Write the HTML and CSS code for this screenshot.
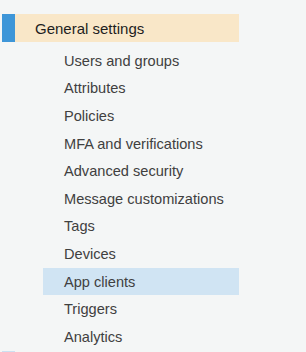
FILE: index.html
```html
<!DOCTYPE html>
<html>
<head>
    <meta charset='utf-8'>
    <title>General settings</title>
    <meta name='viewport' content='width=device-width, initial-scale=1'>
    <link rel="stylesheet" href="styles.css">
</head>
<body>
<div class="sidebar">
    <div class="group">
        <div class="groupHead active">
            <span class="groupTitle">General settings</span>
        </div>
        <ul class="items">
            <li class="item">Users and groups</li>
            <li class="item">Attributes</li>
            <li class="item">Policies</li>
            <li class="item">MFA and verifications</li>
            <li class="item">Advanced security</li>
            <li class="item">Message customizations</li>
            <li class="item">Tags</li>
            <li class="item">Devices</li>
            <li class="item selected">App clients</li>
            <li class="item">Triggers</li>
            <li class="item">Analytics</li>
        </ul>
    </div>
    <div class="group">
        <div class="groupHead next"></div>
    </div>
</div>
</body>
</html>
```

FILE: styles.css
```css
html {
    background-color: #f4f6f6;
}

body {
    margin: 0;
    height: 352px;
    overflow: hidden;
    font-family: "Liberation Sans", Arial, sans-serif;
    font-size: 14.6px;
}

.sidebar {
    padding-top: 14px;
}

.groupHead {
    display: flex;
    align-items: center;
    margin-left: 2px;
    width: 237px;
    height: 28px;
    border-left: 13px solid #3e96d8;
    box-sizing: border-box;
}

.groupHead.active {
    background-color: #f9e7c8;
}

.groupHead.next {
    border-left-color: #cbe0f1;
}

.groupTitle {
    padding-left: 20px;
    color: #1e1e1e;
    font-size: 15px;
}

.items {
    list-style: none;
    margin: 5px 0 0 43px;
    padding: 0;
    width: 196px;
}

.item {
    display: flex;
    align-items: center;
    height: 27.6px;
    padding-left: 21px;
    color: #404040;
}

.item.selected {
    background-color: #d0e4f3;
}
```
